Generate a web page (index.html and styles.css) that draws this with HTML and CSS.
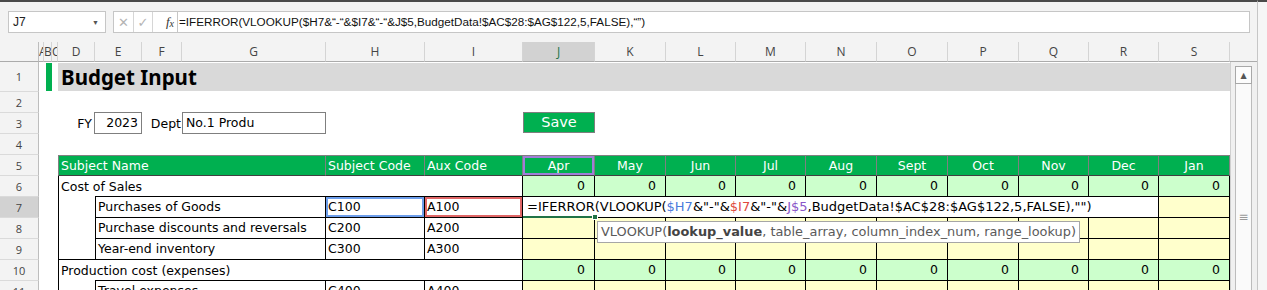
FILE: index.html
```html
<!DOCTYPE html>
<html lang="en">
<head>
<meta charset="utf-8">
<title>Budget Input</title>
<link rel="stylesheet" href="styles.css">
</head>
<body>
<div class="app">
  <div class="main">
    <div class="fbar">
      <div class="namebox"><span>J7</span><span class="nb-arrow">▼</span></div>
      <div class="fbtns">
        <span class="fbtn">✕</span>
        <span class="fbtn">✓</span>
        <span class="fbtn fx"><i>f</i><span class="x">x</span></span>
      </div>
      <div class="finput">=IFERROR(VLOOKUP($H7&amp;“-“&amp;$I7&amp;“-“&amp;J$5,BudgetData!$AC$28:$AG$122,5,FALSE),“”)</div>
    </div>
    <div class="workarea">
      <div class="sheet">
        <!-- column headers -->
        <div class="corner"></div>
        <div class="ch">A</div><div class="ch">B</div><div class="ch">C</div><div class="ch">D</div><div class="ch">E</div><div class="ch">F</div><div class="ch">G</div><div class="ch">H</div><div class="ch">I</div><div class="ch sel">J</div><div class="ch">K</div><div class="ch">L</div><div class="ch">M</div><div class="ch">N</div><div class="ch">O</div><div class="ch">P</div><div class="ch">Q</div><div class="ch">R</div><div class="ch">S</div>

        <!-- row 1 -->
        <div class="rh">1</div><div></div><div class="barcell"><span class="bar"></span></div><div></div>
        <div class="title span16">Budget Input</div>

        <!-- row 2 -->
        <div class="rh">2</div><div class="span19"></div>

        <!-- row 3 -->
        <div class="rh">3</div><div class="span3"></div>
        <div class="lbl">FY</div>
        <div class="field num">2023</div>
        <div class="lbl lbl-tight">Dept</div>
        <div class="field">No.1 Produ</div>
        <div class="span2"></div>
        <div class="btncell"><button class="save">Save</button></div>
        <div class="span9"></div>

        <!-- row 4 -->
        <div class="rh">4</div><div class="span19"></div>

        <!-- row 5 -->
        <div class="rh">5</div><div class="span3"></div>
        <div class="hd hd-first span4">Subject Name</div>
        <div class="hd">Subject Code</div>
        <div class="hd">Aux Code</div>
        <div class="hd mid ref-purple">Apr</div><div class="hd mid">May</div><div class="hd mid">Jun</div><div class="hd mid">Jul</div><div class="hd mid">Aug</div><div class="hd mid">Sept</div><div class="hd mid">Oct</div><div class="hd mid">Nov</div><div class="hd mid">Dec</div><div class="hd mid">Jan</div>

        <!-- row 6 -->
        <div class="rh">6</div><div class="span3"></div>
        <div class="grp span6">Cost of Sales</div>
        <div class="v g">0</div><div class="v g">0</div><div class="v g">0</div><div class="v g">0</div><div class="v g">0</div><div class="v g">0</div><div class="v g">0</div><div class="v g">0</div><div class="v g">0</div><div class="v g">0</div>

        <!-- row 7 -->
        <div class="rh sel">7</div><div class="span3"></div>
        <div class="indent"></div>
        <div class="name span3">Purchases of Goods</div>
        <div class="code ref-blue">C100</div>
        <div class="code ref-red">A100</div>
        <div class="edit span9">=IFERROR(VLOOKUP(<span class="r1">$H7</span>&amp;"-"&amp;<span class="r2">$I7</span>&amp;"-"&amp;<span class="r3">J$5</span>,BudgetData!$AC$28:$AG$122,5,FALSE),"")<span class="active-line"></span><span class="handle"></span><div class="tip">VLOOKUP(<b>lookup_value</b>, table_array, column_index_num, range_lookup)</div></div>
        <div class="v y"></div>

        <!-- row 8 -->
        <div class="rh">8</div><div class="span3"></div>
        <div class="indent"></div>
        <div class="name span3">Purchase discounts and reversals</div>
        <div class="code">C200</div>
        <div class="code">A200</div>
        <div class="v y"></div><div class="v y"></div><div class="v y"></div><div class="v y"></div><div class="v y"></div><div class="v y"></div><div class="v y"></div><div class="v y"></div><div class="v y"></div><div class="v y"></div>

        <!-- row 9 -->
        <div class="rh">9</div><div class="span3"></div>
        <div class="indent last"></div>
        <div class="name span3">Year-end inventory</div>
        <div class="code">C300</div>
        <div class="code">A300</div>
        <div class="v y"></div><div class="v y"></div><div class="v y"></div><div class="v y"></div><div class="v y"></div><div class="v y"></div><div class="v y"></div><div class="v y"></div><div class="v y"></div><div class="v y"></div>

        <!-- row 10 -->
        <div class="rh">10</div><div class="span3"></div>
        <div class="grp span6">Production cost (expenses)</div>
        <div class="v g">0</div><div class="v g">0</div><div class="v g">0</div><div class="v g">0</div><div class="v g">0</div><div class="v g">0</div><div class="v g">0</div><div class="v g">0</div><div class="v g">0</div><div class="v g">0</div>

        <!-- row 11 -->
        <div class="rh">11</div><div class="span3"></div>
        <div class="indent"></div>
        <div class="name span3">Travel expenses</div>
        <div class="code">C400</div>
        <div class="code">A400</div>
        <div class="v y"></div><div class="v y"></div><div class="v y"></div><div class="v y"></div><div class="v y"></div><div class="v y"></div><div class="v y"></div><div class="v y"></div><div class="v y"></div><div class="v y"></div>
      </div>
      <div class="vscroll">
        <div class="vs-head"></div>
        <div class="vs-track">
          <div class="vs-btn">▲</div>
          <div class="vs-thumb"><span class="grip">≡</span></div>
        </div>
      </div>
    </div>
  </div>
  <div class="edge"></div>
</div>
</body>
</html>
```

FILE: styles.css
```css
* { box-sizing: border-box; margin: 0; padding: 0; }

html, body {
  width: 1267px;
  height: 290px;
  overflow: hidden;
  background: #ffffff;
}

body {
  font-family: "DejaVu Sans", "Noto Sans", sans-serif;
  font-size: 12.5px;
  color: #000;
}

.app {
  display: flex;
  width: 1267px;
  height: 290px;
}

.main {
  width: 1257px;
  display: flex;
  flex-direction: column;
}

.edge {
  width: 10px;
  border-left: 1px solid #c6c6c6;
  border-top: 2px solid #4a4a4a;
  background: #f6f6f6;
}

/* ---------- formula bar ---------- */
.fbar {
  height: 42px;
  flex: none;
  border-top: 2px solid #4a4a4a;
  background: #f3f3f3;
  display: flex;
  align-items: flex-start;
  padding: 9px 0 0 8px;
}

.namebox {
  width: 98px;
  height: 22px;
  border: 1px solid #c6c6c6;
  background: #fff;
  display: flex;
  align-items: center;
  justify-content: space-between;
  padding: 0 6px 0 4px;
  font-family: "Liberation Sans", sans-serif;
  font-size: 12px;
  color: #222;
}

.nb-arrow {
  font-size: 7px;
  color: #555;
}

.fbtns {
  margin-left: 7px;
  display: flex;
  height: 22px;
  border: 1px solid #c6c6c6;
  border-right: none;
  background: #fff;
}

.fbtn {
  width: 20px;
  border-right: 1px solid #d6d6d6;
  display: flex;
  align-items: center;
  justify-content: center;
  color: #b4b4b4;
  font-family: "DejaVu Sans", sans-serif;
  font-size: 13px;
}

.fbtn + .fbtn { width: 19px; }

.fbtn.fx {
  width: 24px;
  border-right: none;
  justify-content: flex-end;
  padding-right: 3px;
  color: #333;
  font-family: "Liberation Serif", serif;
  font-size: 13px;
}

.fbtn.fx .x { font-size: 10px; font-style: italic; margin-top: 3px; }

.finput {
  width: 1073px;
  height: 22px;
  border: 1px solid #c6c6c6;
  background: #fff;
  padding-left: 1px;
  line-height: 20px;
  font-family: "Liberation Sans", sans-serif;
  font-size: 11.7px;
  color: #111;
  white-space: nowrap;
  overflow: hidden;
}

/* ---------- work area ---------- */
.workarea {
  display: flex;
  flex: 1;
  min-height: 0;
}

.sheet {
  width: 1230px;
  flex: none;
  display: grid;
  grid-template-columns: 39px 5px 8px 6px 37px 47px 40px 144px 99px 98px 72px 71px 70px 70px 71px 71px 71px 70px 70px 71px;
  grid-template-rows: 20px 30px repeat(10, 21px);
  align-content: start;
}

.sheet > div {
  min-width: 0;
  white-space: nowrap;
}

.span2 { grid-column: span 2; }
.span3 { grid-column: span 3; }
.span4 { grid-column: span 4; }
.span6 { grid-column: span 6; }
.span9 { grid-column: span 9; }
.span16 { grid-column: span 16; }
.span19 { grid-column: span 19; }

/* headers */
.corner {
  background: #f3f3f3;
  border-right: 1px solid #bdbdbd;
  border-bottom: 1px solid #ababab;
}

.ch {
  background: #f3f3f3;
  border-right: 1px solid #d4d4d4;
  border-bottom: 1px solid #ababab;
  font-family: "Open Sans", sans-serif;
  font-size: 12px;
  color: #444;
  text-align: center;
  line-height: 19px;
  overflow: hidden;
}

.ch.sel {
  background: #d2d2d2;
  color: #217346;
}

.rh {
  background: #f3f3f3;
  border-right: 1px solid #bdbdbd;
  border-bottom: 1px solid #dadada;
  font-family: "Open Sans", sans-serif;
  font-size: 11px;
  color: #444;
  display: flex;
  align-items: center;
  justify-content: center;
}

.rh.sel { background: #d2d2d2; }

/* row 1 */
.barcell { padding: 1px 0 1px 2px; }
.bar {
  display: block;
  width: 6px;
  height: 100%;
  background: #00b050;
}

.title {
  background: #d9d9d9;
  margin: 1px 0 1px 0;
  padding-left: 3px;
  font-family: "Noto Sans", sans-serif;
  font-size: 20.5px;
  font-weight: 700;
  line-height: 28px;
}

/* row 3 */
.lbl {
  text-align: right;
  padding-right: 3px;
  line-height: 21px;
}

.lbl-tight { padding-right: 1px; }

.field {
  border: 1px solid #7f7f7f;
  background: #fff;
  padding-left: 3px;
  line-height: 19px;
  margin-top: -1px;
  overflow: hidden;
}

.field.num {
  text-align: right;
  padding-right: 3px;
  margin-left: -1px;
}

.btncell { margin-top: -1px; }

.save {
  display: block;
  width: 100%;
  height: 21px;
  border: 1px solid #7f7f7f;
  background: #00b050;
  color: #fff;
  font-family: "DejaVu Sans", sans-serif;
  font-size: 14.5px;
  line-height: 19px;
}

/* table header */
.hd {
  background: #00b050;
  color: #fff;
  border-top: 1px solid #808080;
  border-right: 1px solid #808080;
  border-bottom: 1px solid #404040;
  padding-left: 2px;
  line-height: 19px;
  overflow: hidden;
}

.hd-first { border-left: 1px solid #808080; }
.hd.mid { text-align: center; padding-left: 0; }

.ref-purple { box-shadow: inset 0 0 0 2px #a07ed8; }

/* body rows */
.grp {
  border-left: 1px solid #000;
  border-right: 1px solid #000;
  padding-left: 2px;
  line-height: 21px;
  background: linear-gradient(#000, #000) no-repeat right bottom / calc(100% - 36px) 1px;
}

.indent {
  border-left: 1px solid #000;
}

.indent.last { border-bottom: 1px solid #000; }

.name {
  border-left: 1px solid #000;
  border-right: 1px solid #000;
  border-bottom: 1px solid #000;
  padding-left: 2px;
  line-height: 20px;
  overflow: hidden;
}

.code {
  border-right: 1px solid #000;
  border-bottom: 1px solid #000;
  padding-left: 2px;
  line-height: 20px;
  overflow: hidden;
}

.ref-blue { box-shadow: inset 0 0 0 2px #6d9eeb; }
.ref-red { box-shadow: inset 0 0 0 2px #e06666; }

.v {
  border-right: 1px solid #000;
  border-bottom: 1px solid #000;
  text-align: right;
  padding-right: 9px;
  line-height: 20px;
}

.v.g { background: #ccffcc; }
.v.y { background: #ffffcc; }

.edit {
  position: relative;
  background: #fff;
  border-right: 1px solid #000;
  border-bottom: 1px solid #000;
  padding-left: 4px;
  line-height: 20px;
  font-size: 13px;
  overflow: visible;
}

.r1 { color: #4a7bdc; }
.r2 { color: #e04a3c; }
.r3 { color: #8a55c8; }

.active-line {
  position: absolute;
  left: 0;
  bottom: -1px;
  width: 72px;
  height: 2px;
  background: #217346;
}

.handle {
  position: absolute;
  left: 69px;
  bottom: -3px;
  width: 6px;
  height: 6px;
  background: #217346;
  border: 1px solid #fff;
}

.tip {
  position: absolute;
  left: 74px;
  top: 24px;
  z-index: 2;
  height: 22px;
  padding: 0 3px;
  border: 1px solid #a6a6a6;
  background: #fff;
  color: #5a5a5a;
  line-height: 20px;
  font-size: 12.9px;
  white-space: nowrap;
}

.tip b { color: #444; }

/* ---------- vertical scrollbar ---------- */
.vscroll {
  width: 27px;
  flex: none;
  display: flex;
  flex-direction: column;
  background: #f0f0f0;
}

.vs-head {
  height: 20px;
  flex: none;
  background: #f3f3f3;
  border-bottom: 1px solid #ababab;
}

.vs-track {
  flex: 1;
  padding: 4px 5px 0 4px;
  display: flex;
  flex-direction: column;
  border-left: 1px solid #d0d0d0;
}

.vs-btn {
  height: 18px;
  flex: none;
  border: 1px solid #a8a8a8;
  background: #fcfcfc;
  color: #555;
  font-size: 8px;
  display: flex;
  align-items: center;
  justify-content: center;
}

.vs-thumb {
  height: 266px;
  flex: none;
  border: 1px solid #bcbcbc;
  border-top: none;
  background: #fafafa;
  display: flex;
  align-items: center;
  justify-content: center;
  color: #999;
  font-size: 12px;
}
```
